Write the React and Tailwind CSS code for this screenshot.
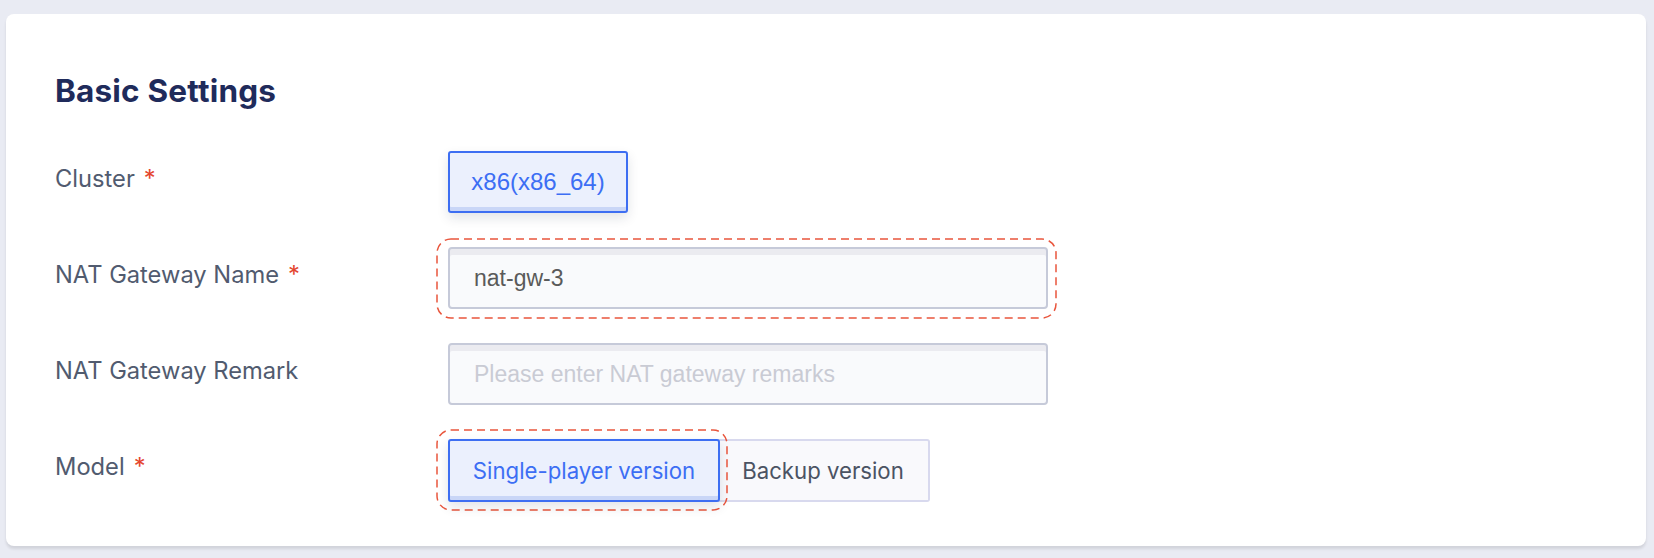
import React from "react";

const inter = { fontFamily: "Inter, 'Noto Sans', sans-serif" };

function Dashed({ className }) {
  return (
    <svg
      className={"pointer-events-none absolute overflow-visible " + className}
      width="100%"
      height="100%"
      aria-hidden="true"
    >
      <rect
        x="0"
        y="0"
        width="100%"
        height="100%"
        rx="14"
        ry="14"
        fill="none"
        stroke="#e9563d"
        strokeWidth="1.5"
        strokeDasharray="8 5"
      />
    </svg>
  );
}

function Label({ text, required }) {
  return (
    <div
      className="w-[393px] shrink-0 h-[62px] leading-[56px] text-[23.7px] text-[#515b6f]"
      style={inter}
    >
      {text}
      {required && <span className="ml-[9px] text-[#e4462e]">*</span>}
    </div>
  );
}

export default function App() {
  return (
    <div className="min-h-screen bg-[#e9ebf3] pt-[14px] px-[8px] pb-[8px]">
      <div className="h-[532px] w-[1640px] -ml-[2px] rounded-[8px] bg-white pl-[49px] pt-[62px] shadow-[0_3px_3px_rgba(0,0,0,0.1)]">
        <h2
          className="text-[31.5px] leading-[30px] font-bold text-[#1f2b5b] tracking-[0.2px]"
          style={inter}
        >
          Basic Settings
        </h2>

        <div className="mt-[45px] flex flex-col gap-[34px]">
          {/* Cluster */}
          <div className="flex items-start">
            <Label text="Cluster" required />
            <button
              className="h-[62px] w-[180px] rounded-[3px] border-2 border-[#3d6ef2] bg-[#ebf0fd] text-[24px] text-[#3c6ef4] shadow-[inset_0_-4px_0_#c9d6f7,0_5px_12px_rgba(20,30,60,0.12)]"
              style={{ fontFamily: "'Liberation Sans', Arial, sans-serif" }}
            >
              x86(x86_64)
            </button>
          </div>

          {/* NAT Gateway Name */}
          <div className="flex items-start">
            <Label text="NAT Gateway Name" required />
            <div className="relative">
              <Dashed className="-left-[11px] -top-[8px] w-[619px] h-[79px]" />
              <input
                readOnly
                value="nat-gw-3"
                className="block h-[62px] w-[600px] rounded-[4px] border-2 border-[#c6cad9] bg-[#f9fafc] px-[24px] text-[23px] text-[#5a5a5a] outline-none shadow-[inset_0_6px_0_#ebebf0]"
                style={{ fontFamily: "'Liberation Sans', Arial, sans-serif" }}
              />
            </div>
          </div>

          {/* NAT Gateway Remark */}
          <div className="flex items-start">
            <Label text="NAT Gateway Remark" />
            <input
              readOnly
              placeholder="Please enter NAT gateway remarks"
              className="block h-[62px] w-[600px] rounded-[4px] border-2 border-[#c6cad9] bg-[#f9fafc] px-[24px] text-[23px] text-[#5a5a5a] outline-none placeholder:text-[#c9cbd4] shadow-[inset_0_6px_0_#ebebf0]"
              style={{ fontFamily: "'Liberation Sans', Arial, sans-serif" }}
            />
          </div>

          {/* Model */}
          <div className="flex items-start">
            <Label text="Model" required />
            <div className="flex">
              <div className="relative">
                <Dashed className="-left-[11px] -top-[9px] w-[290px] h-[80px]" />
                <button
                  className="relative z-10 h-[63px] w-[272px] rounded-[3px] border-2 border-[#3d6ef2] bg-[#ebf0fd] text-[22.2px] text-[#3c6ef4] shadow-[inset_0_-4px_0_#c9d6f7,0_5px_12px_rgba(20,30,60,0.12)]"
                  style={inter}
                >
                  Single-player version
                </button>
              </div>
              <button
                className="-ml-[2px] h-[63px] w-[212px] rounded-r-[3px] border-2 border-l-0 border-[#d8d9ee] bg-[#f9f9fc] text-[22.2px] text-[#4b5363]"
                style={inter}
              >
                Backup version
              </button>
            </div>
          </div>
        </div>
      </div>
    </div>
  );
}
